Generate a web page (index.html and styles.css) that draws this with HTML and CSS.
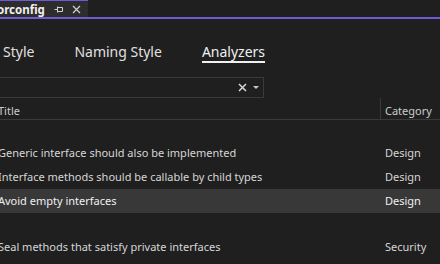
FILE: index.html
```html
<!DOCTYPE html>
<html lang="en">
<head>
    <meta charset="UTF-8">
    <title>.editorconfig</title>
    <link rel="stylesheet" href="styles.css">
</head>
<body>
    <div class="titlebar">
        <div class="doc-tab">
            <span class="doc-name">orconfig</span>
            <svg class="pin" width="9" height="9" viewBox="0 0 9 9">
                <path d="M0.5 4.5H3.5M3.5 1.5V7.5M3.5 2.5H8.5V6.5H3.5" fill="none" stroke="#d0d0d0" stroke-width="1"/>
            </svg>
            <svg class="close" width="9" height="9" viewBox="0 0 9 9">
                <path d="M1 1L8 8M8 1L1 8" stroke="#d0d0d0" stroke-width="1.2"/>
            </svg>
        </div>
    </div>
    <div class="accent"></div>

    <div class="tabs">
        <span class="tab tab-style">Style</span>
        <span class="tab">Naming Style</span>
        <span class="tab active">Analyzers</span>
    </div>

    <div class="search">
        <svg class="clear" width="9" height="9" viewBox="0 0 9 9">
            <path d="M1 1L8 8M8 1L1 8" stroke="#d8d8d8" stroke-width="1.5"/>
        </svg>
        <svg class="drop" width="6" height="4" viewBox="0 0 6 4">
            <path d="M0 0H6L3 3Z" fill="#c8c8c8"/>
        </svg>
    </div>

    <div class="grid">
        <div class="grid-head">
            <div class="col-title">Title</div>
            <div class="col-cat">Category</div>
        </div>
        <div class="spacer"></div>
        <div class="row">
            <div class="col-title">Generic interface should also be implemented</div>
            <div class="col-cat">Design</div>
        </div>
        <div class="row">
            <div class="col-title">Interface methods should be callable by child types</div>
            <div class="col-cat">Design</div>
        </div>
        <div class="row selected">
            <div class="col-title">Avoid empty interfaces</div>
            <div class="col-cat">Design</div>
        </div>
        <div class="spacer small"></div>
        <div class="row">
            <div class="col-title">Seal methods that satisfy private interfaces</div>
            <div class="col-cat">Security</div>
        </div>
    </div>
</body>
</html>
```

FILE: styles.css
```css
body {
    margin: 0;
    background-color: #1f1f1f;
    color: #d6d6d6;
    font-family: "Noto Sans", "Open Sans", sans-serif;
    font-size: 11px;
    overflow: hidden;
}
.titlebar {
    height: 17px;
    display: flex;
}
.doc-tab {
    width: 88px;
    box-sizing: border-box;
    border-top: 1px solid #6b5bd6;
    background-color: #2d2d2d;
    display: flex;
    align-items: center;
}
.doc-name {
    color: #f0f0f0;
    font-weight: bold;
    font-size: 11.5px;
    margin-left: -3px;
}
.pin {
    margin-left: 9px;
}
.close {
    margin-left: 9px;
}
.accent {
    height: 2px;
    background-color: #6b5bd6;
}
.tabs {
    display: flex;
    padding-top: 24px;
}
.tab {
    font-size: 14px;
    line-height: 18px;
    color: #e0e0e0;
    margin-right: 40px;
    position: relative;
}
.tab-style {
    margin-left: 3px;
}
.tab.active {
    color: #f0f0f0;
}
.tab.active::after {
    content: "";
    position: absolute;
    left: 0;
    right: 0;
    bottom: -2px;
    height: 2px;
    background-color: #f0f0f0;
}
.search {
    margin-top: 16px;
    margin-left: -2px;
    width: 266px;
    height: 21px;
    box-sizing: border-box;
    border: 1px solid #3a3a3a;
    display: flex;
    align-items: center;
    justify-content: flex-end;
}
.clear {
    margin-right: 6px;
}
.drop {
    margin-right: 4px;
}
.grid-head {
    display: flex;
    height: 21px;
    border-bottom: 1px solid #3a3a3a;
    color: #cccccc;
    align-items: center;
}
.grid-head .col-title {
    padding-top: 3px;
}
.grid-head .col-cat {
    border-left: 1px solid #3a3a3a;
    align-self: stretch;
    display: flex;
    align-items: center;
    padding-top: 3px;
    padding-left: 4px;
}
.col-title {
    width: 382px;
    flex-shrink: 0;
    margin-left: -2px;
    white-space: nowrap;
}
.col-cat {
    padding-left: 5px;
}
.spacer {
    height: 21px;
}
.spacer.small {
    height: 22px;
}
.row {
    display: flex;
    height: 24px;
    box-sizing: border-box;
    padding-top: 2px;
    padding-bottom: 4px;
    align-items: center;
}
.row.selected {
    background-color: #383838;
    color: #f0f0f0;
}
```
